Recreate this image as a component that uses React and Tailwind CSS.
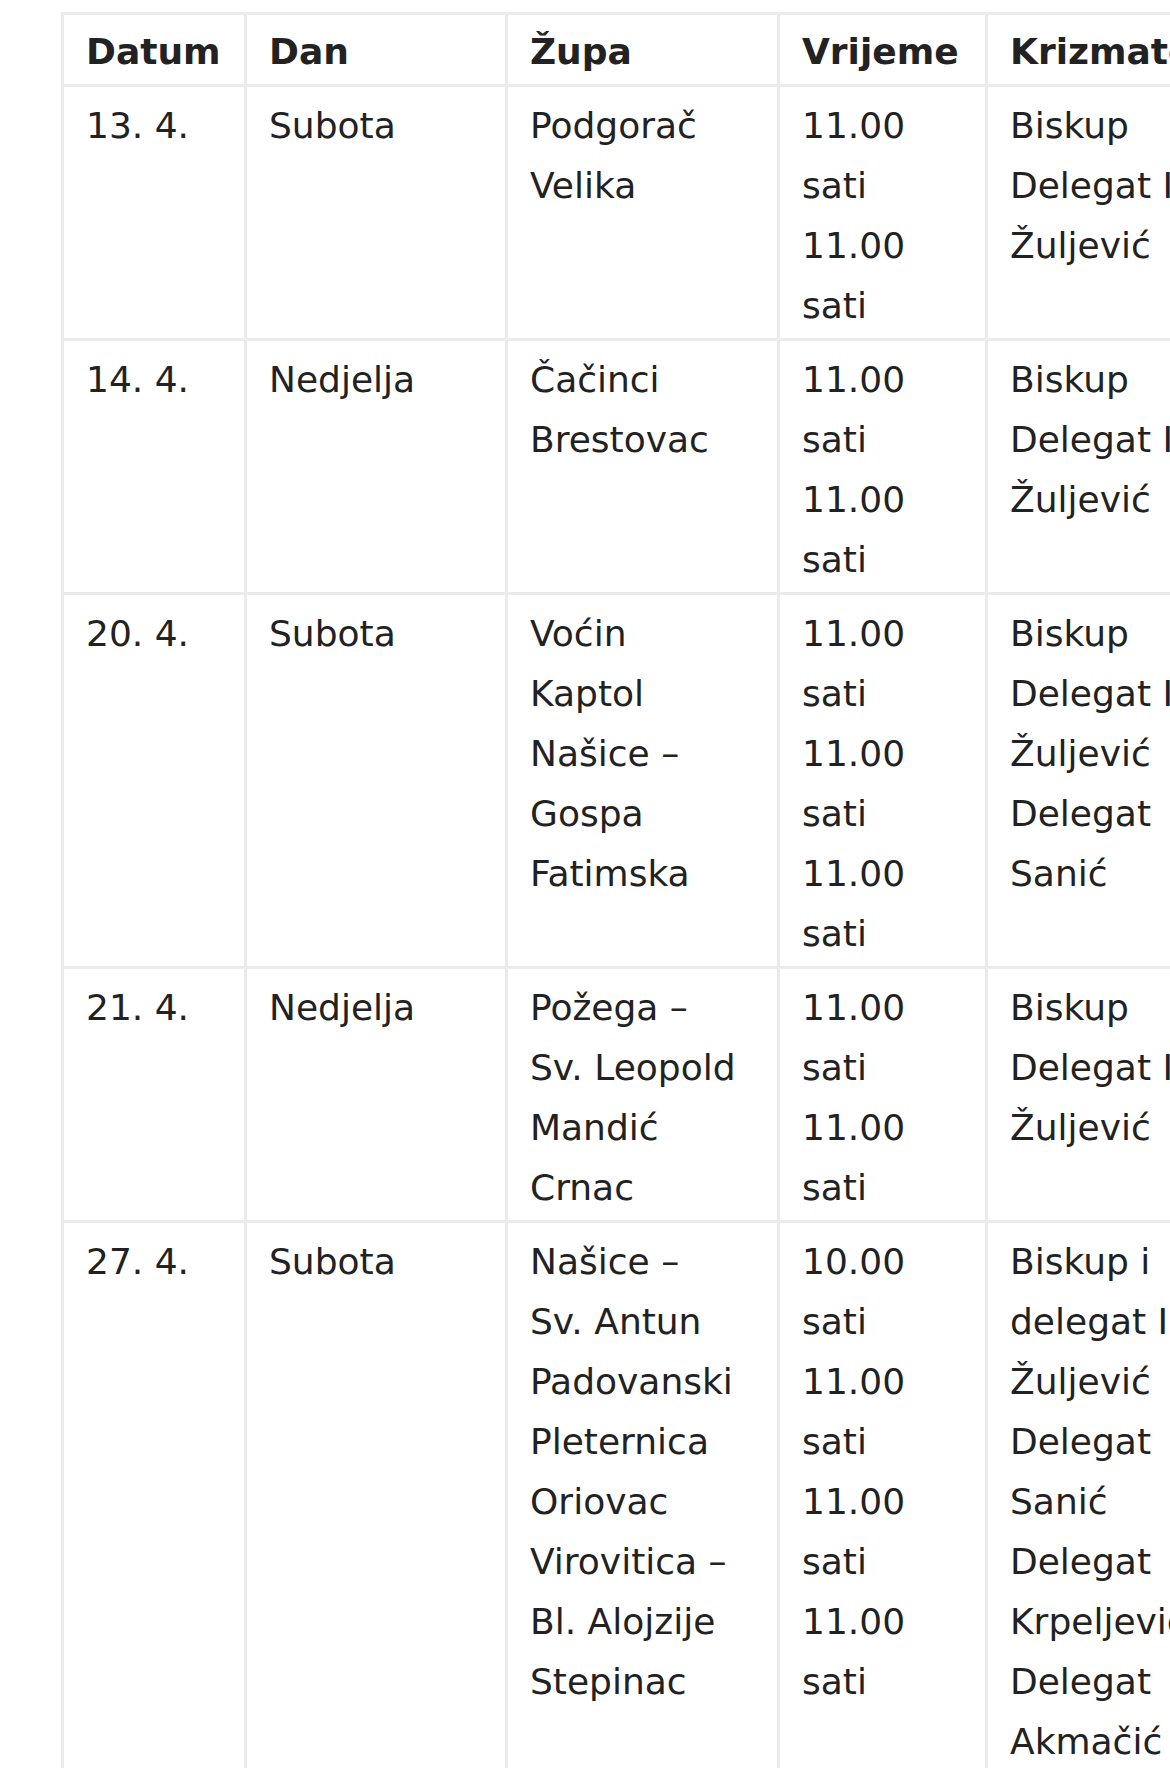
const HEAD = ['Datum', 'Dan', 'Župa', 'Vrijeme', 'Krizmatelj'];

const WIDTHS = ['w-[183px]', 'w-[261px]', 'w-[272px]', 'w-[208px]', 'w-[260px]'];

const ROWS = [
  {
    datum: '13. 4.', dan: 'Subota',
    zupa: ['Podgorač', 'Velika'],
    vrijeme: ['11.00', 'sati', '11.00', 'sati'],
    krizmatelj: ['Biskup', 'Delegat I.', 'Žuljević'],
  },
  {
    datum: '14. 4.', dan: 'Nedjelja',
    zupa: ['Čačinci', 'Brestovac'],
    vrijeme: ['11.00', 'sati', '11.00', 'sati'],
    krizmatelj: ['Biskup', 'Delegat I.', 'Žuljević'],
  },
  {
    datum: '20. 4.', dan: 'Subota',
    zupa: ['Voćin', 'Kaptol', 'Našice –', 'Gospa', 'Fatimska'],
    vrijeme: ['11.00', 'sati', '11.00', 'sati', '11.00', 'sati'],
    krizmatelj: ['Biskup', 'Delegat I.', 'Žuljević', 'Delegat', 'Sanić'],
  },
  {
    datum: '21. 4.', dan: 'Nedjelja',
    zupa: ['Požega –', 'Sv. Leopold', 'Mandić', 'Crnac'],
    vrijeme: ['11.00', 'sati', '11.00', 'sati'],
    krizmatelj: ['Biskup', 'Delegat I.', 'Žuljević'],
  },
  {
    datum: '27. 4.', dan: 'Subota',
    zupa: ['Našice –', 'Sv. Antun', 'Padovanski', 'Pleternica', 'Oriovac', 'Virovitica –', 'Bl. Alojzije', 'Stepinac'],
    vrijeme: ['10.00', 'sati', '11.00', 'sati', '11.00', 'sati', '11.00', 'sati'],
    krizmatelj: ['Biskup i', 'delegat I.', 'Žuljević', 'Delegat', 'Sanić', 'Delegat', 'Krpeljević', 'Delegat', 'Akmačić'],
  },
];

const cell = 'border-r-[3px] border-b-[3px] border-[#ebebeb] pl-[22px] pr-5 pb-[2px] align-top text-left whitespace-nowrap';

const Lines = ({ lines }) => lines.map((l, i) => <div key={i}>{l}</div>);

export default function App() {
  return (
    <div className="h-[1768px] w-full overflow-hidden bg-white font-['DejaVu_Sans',sans-serif] text-[36px] leading-[60px] text-[#222]">
      <div className="pl-[61px] pt-[12px]">
        <table className="table-fixed border-separate border-spacing-0 border-l-[3px] border-t-[3px] border-[#ebebeb] w-[1187px]">
          <colgroup>
            {WIDTHS.map((w, i) => <col key={i} className={w} />)}
          </colgroup>
          <thead>
            <tr>
              {HEAD.map(h => (
                <th key={h} className={`${cell} pt-[7px] font-bold`}>{h}</th>
              ))}
            </tr>
          </thead>
          <tbody>
            {ROWS.map(r => (
              <tr key={r.datum}>
                <td className={`${cell} pt-[9px]`}>{r.datum}</td>
                <td className={`${cell} pt-[9px]`}>{r.dan}</td>
                <td className={`${cell} pt-[9px]`}><Lines lines={r.zupa} /></td>
                <td className={`${cell} pt-[9px]`}><Lines lines={r.vrijeme} /></td>
                <td className={`${cell} pt-[9px]`}><Lines lines={r.krizmatelj} /></td>
              </tr>
            ))}
          </tbody>
        </table>
      </div>
    </div>
  );
}
